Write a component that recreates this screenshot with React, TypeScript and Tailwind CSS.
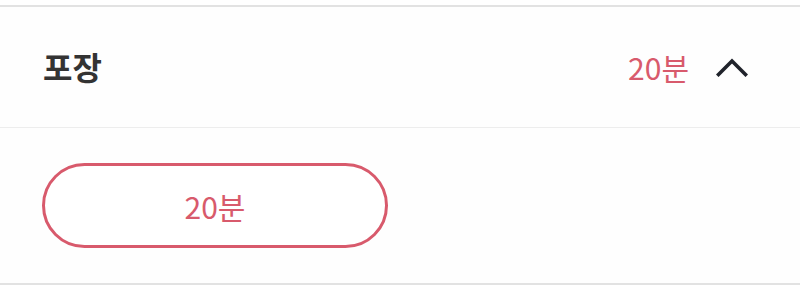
export default function App() {
  return (
    <div className="h-[285px] w-[800px] bg-white pt-[5px] font-['Noto_Sans_CJK_KR','Noto_Sans',sans-serif]">
      <section className="border-t-2 border-b-2 border-[#e2e2e2] bg-[#fefefe]">
        {/* Header row */}
        <div className="flex h-[121px] items-center justify-between border-b border-[#ededed] pl-[43px] pr-[52px]">
          <h3 className="-mt-[3px] text-[32px] font-bold leading-none text-[#333333]">포장</h3>
          <div className="flex items-center gap-[27px]">
            <span className="text-[30px] leading-none text-[#d85a6c]">20분</span>
            <svg width="32" height="20" viewBox="0 0 32 20" fill="none">
              <path d="M2.5 17.5 L16 4 L29.5 17.5" stroke="#20232b" strokeWidth="3.6" strokeLinecap="square" strokeLinejoin="miter" />
            </svg>
          </div>
        </div>

        {/* Options */}
        <div className="px-[42px] pt-[35px] pb-[35px]">
          <button className="flex h-[85px] w-[346px] items-center justify-center rounded-full border-[3.5px] border-[#d85a6c] bg-white text-[30px] leading-none text-[#d85a6c]">
            20분
          </button>
        </div>
      </section>
    </div>
  )
}
